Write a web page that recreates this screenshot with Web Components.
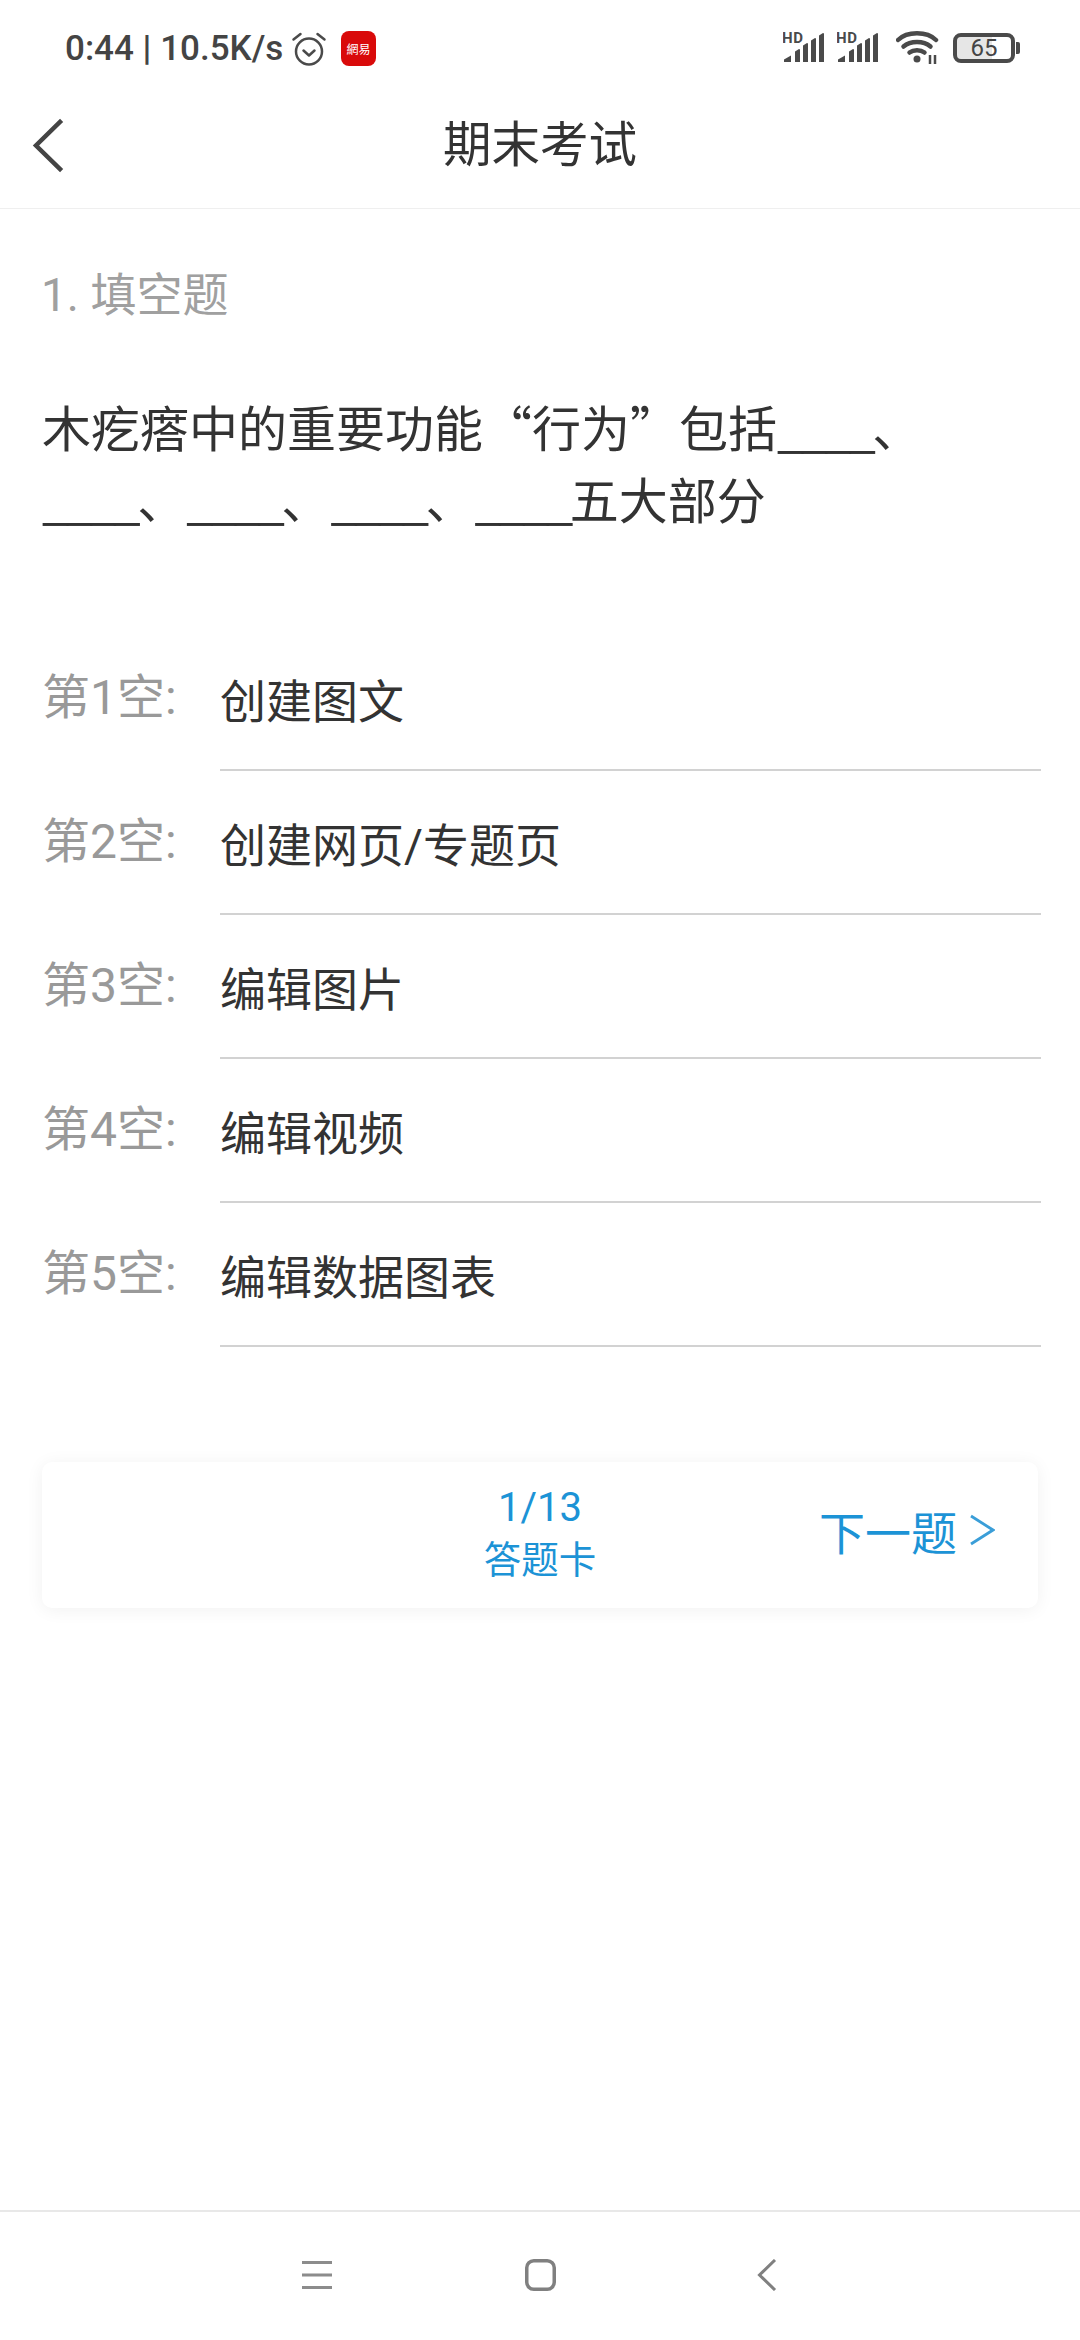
<!DOCTYPE html>
<html lang="zh-CN">
<head>
<meta charset="utf-8">
<title>期末考试</title>
<style>
html,body{margin:0;padding:0;background:#fff}
body{width:1080px;height:2340px;display:flex;flex-direction:column;font-family:"Noto Sans CJK SC","Noto Sans",sans-serif;overflow:hidden}
quiz-main{flex:1}
</style>
</head>
<body>
<status-bar></status-bar>
<nav-header>期末考试</nav-header>
<quiz-main>
  <quiz-question kind="1. 填空题">木疙瘩中的重要功能“行为”包括<fill-blank></fill-blank>、<br><fill-blank></fill-blank>、<fill-blank></fill-blank>、<fill-blank></fill-blank>、<fill-blank></fill-blank>五大部分</quiz-question>
  <blank-list>
    <blank-row n="第1空:">创建图文</blank-row>
    <blank-row n="第2空:">创建网页/专题页</blank-row>
    <blank-row n="第3空:">编辑图片</blank-row>
    <blank-row n="第4空:">编辑视频</blank-row>
    <blank-row n="第5空:">编辑数据图表</blank-row>
  </blank-list>
  <quiz-card></quiz-card>
</quiz-main>
<system-nav></system-nav>
<script>
function def(name, html, setup){
  customElements.define(name, class extends HTMLElement{
    constructor(){super();this.attachShadow({mode:'open'}).innerHTML=html;}
    connectedCallback(){ if(setup) setup(this); }
  });
}
const cjk='"Noto Sans CJK SC","Noto Sans",sans-serif';
const mix='Roboto,"Noto Sans CJK SC",sans-serif';
const signal=`<svg width="42" height="32" viewBox="0 0 42 32" style="display:block"><g fill="#4a4a4a">
<path d="M1 32v-2.500l7-4V32zM12 32V21.500l4-2.500 1 .5V32zM20 32V15.500l4-2.500 1 .5V32zM28 32V10.500l4-2.500 1 .5V32zM36 32V5.500l4-2.500 1 .5V32z"/></g>
<text x="-1" y="13" font-family="Roboto,sans-serif" font-weight="700" font-size="15" fill="#4a4a4a" letter-spacing=".6">HD</text></svg>`;
def('status-bar',`<style>
:host{display:flex;align-items:flex-start;height:84px;box-sizing:border-box;padding:28px 0 0 65px;color:#444;font:500 35px/40px Roboto,sans-serif}
.t{white-space:nowrap;margin-top:1px;width:228px;flex:none}
.s{font-weight:700}
.alarm{margin:3px 0 0 -2px;flex:none}
.app{flex:none;width:35px;height:35px;margin:3px 0 0 14px;border-radius:8px;background:#d90a0a;color:#fff;font:400 12px/35px ${cjk};text-align:center;overflow:hidden}
.r{margin-left:auto;display:flex;align-items:flex-start;padding-right:65px}
.b{position:relative;box-sizing:border-box;width:62px;height:30px;border:4px solid #4a4a4a;border-radius:8px;margin:5px 0 0 13px;font:400 24px/22px Roboto,sans-serif;color:#444;text-align:center;background:linear-gradient(90deg,#e6e6e6 65%,#fff 65%);background-clip:padding-box}
.b:after{content:"";position:absolute;right:-9px;top:5px;width:4px;height:12px;background:#4a4a4a;border-radius:0 2px 2px 0}
</style>
<span class="t">0:44 <span class="s">|</span> 10.5K/s</span>
<svg class="alarm" width="36" height="36" viewBox="0 0 36 36" fill="none" stroke="#4a4a4a" stroke-width="2.500" stroke-linecap="round" stroke-linejoin="round"><circle cx="18" cy="20.500" r="13"/><path d="M12.500 19.500l5.500 5 5.500-5"/><path d="M2.500 8.500l7-5.500M33.500 8.500l-7-5.500"/></svg>
<span class="app">網易</span>
<span class="r">
<span style="margin-top:2px">${signal}</span>
<span style="margin:2px 0 0 12px">${signal}</span>
<svg style="margin:3px 0 0 17px" width="44" height="34" viewBox="0 0 44 34" fill="none" stroke="#4a4a4a" stroke-width="4.500" stroke-linecap="round"><path d="M2 9C11 0 31 0 40 9"/><path d="M7.500 15.500c7-6 20-6 27 0"/><path d="M13.500 21.500c4-3 11-3 15 0"/><circle cx="21" cy="28" r="3.500" fill="#4a4a4a" stroke="none"/><path stroke-width="2.500" stroke-linecap="butt" d="M34 24v9M39 24v9"/></svg>
<span class="b">65</span>
</span>`);
def('nav-header',`<style>
:host{display:flex;align-items:center;justify-content:center;position:relative;height:125px;box-sizing:border-box;border-bottom:1px solid #efefef;padding-bottom:10px;color:#333;font:400 48.500px/60px ${cjk}}
svg{position:absolute;left:30px;top:33px}
</style>
<svg width="36" height="56" viewBox="0 0 36 56" fill="none" stroke="#444" stroke-width="4.500" stroke-linecap="square"><path d="M30 5L6 28.500 30 52"/></svg><slot></slot>`);
def('fill-blank',`<style>:host{display:inline;letter-spacing:-3.600px}</style>____`);
def('quiz-question',`<style>
:host{display:block;padding:53px 42px 0}
.k{color:#a0a0a0;font:400 46px/66px ${mix};margin-left:-1px}
.q{margin-top:62px;color:#333;font:400 49px/72px ${cjk}}
</style><div class="k"></div><div class="q"><slot></slot></div>`,el=>{el.shadowRoot.querySelector('.k').textContent=el.getAttribute('kind');});
def('blank-list',`<style>:host{display:block;margin-top:93px}</style><slot></slot>`);
def('blank-row',`<style>
:host{display:flex;height:144px;box-sizing:border-box;padding:0 39px 0 42px}
.n{flex:none;width:178px;color:#999;font:400 48px/1 ${mix};padding-top:47px;white-space:nowrap}
.v{flex:1;box-sizing:border-box;border-bottom:2px solid #d2d2d2;color:#333;font:400 46px/1 ${mix};padding-top:52px}
</style><span class="n"></span><span class="v"><slot></slot></span>`,el=>{el.shadowRoot.querySelector('.n').textContent=el.getAttribute('n');});
def('quiz-card',`<style>
:host{display:block;position:relative;box-sizing:border-box;margin:115px 42px 0;height:146px;background:#fff;border-radius:10px;box-shadow:0 2px 18px rgba(0,0,0,.06);color:#1c93d6}
.c{display:flex;flex-direction:column;align-items:center;padding-top:23px}
.a{font:400 40px/46px Roboto,sans-serif}
.b{font:400 37.500px/52px ${cjk}}
.n{position:absolute;right:43px;top:35px;display:flex;align-items:center;font:400 46px/66px ${cjk};gap:12px}
</style>
<div class="c"><span class="a">1/13</span><span class="b">答题卡</span></div>
<div class="n"><span>下一题</span><svg width="26" height="32" viewBox="0 0 26 32" fill="none" stroke="#3a9ed8" stroke-width="2.800"><path d="M2 2L24 16 2 30"/></svg></div>`);
def('system-nav',`<style>
:host{display:flex;flex:none;height:130px;box-sizing:border-box;border-top:2px solid #e8e8e8}
.g{display:flex;align-items:flex-start;padding:47px 0 0 302px}
.m{margin-top:2px}
.h{margin-left:193px}
.c{margin-left:201px}
</style>
<div class="g">
<svg class="m" width="30" height="28" viewBox="0 0 30 28" stroke="#8c8c8c" stroke-width="3"><path d="M0 1.500h30M0 14h30M0 26.500h30"/></svg>
<svg class="h" width="31" height="32" viewBox="0 0 31 32" fill="none" stroke="#808080" stroke-width="3.500"><rect x="1.750" y="1.750" width="27.500" height="28.500" rx="7"/></svg>
<svg class="c" width="20" height="32" viewBox="0 0 20 32" fill="none" stroke="#808080" stroke-width="3"><path d="M18 1L2.500 16 18 31"/></svg>
</div>`);
def('quiz-main',`<style>:host{display:block}</style><slot></slot>`);
</script>
</body>
</html>
